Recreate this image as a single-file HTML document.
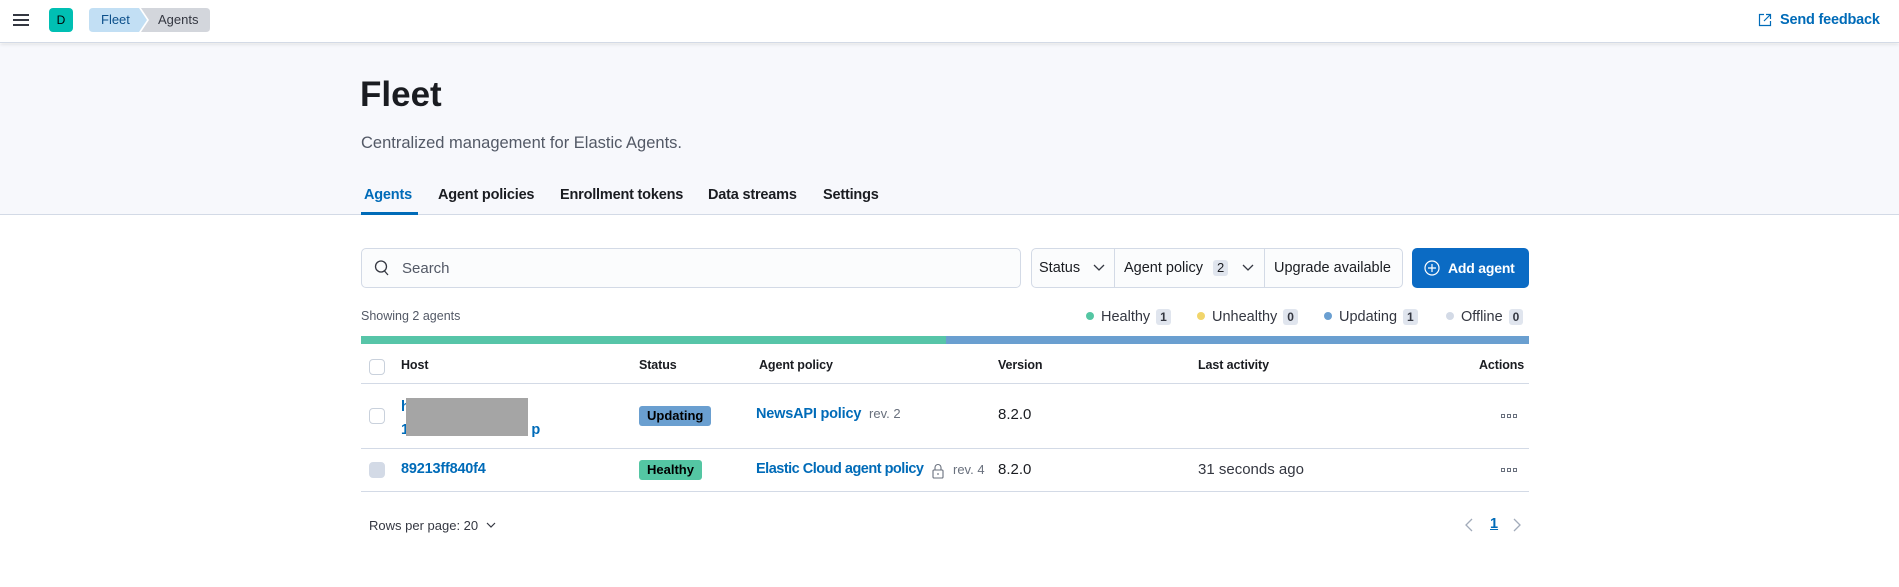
<!DOCTYPE html>
<html><head><meta charset="utf-8"><style>
*{box-sizing:border-box;margin:0;padding:0}
body{width:1899px;height:587px;overflow:hidden;background:#fff;font-family:"Liberation Sans",sans-serif;color:#1a1c21;position:relative}
.a{position:absolute;white-space:nowrap}
.hdr{position:absolute;left:0;top:0;width:1899px;height:43px;background:#fff;border-bottom:1px solid #d3dae6;box-shadow:0 1px 4px rgba(0,0,0,.12);z-index:2}
.pg{position:absolute;left:0;top:44px;width:1899px;height:171px;background:#f7f8fc;border-bottom:1px solid #d3dae6}
.tab{position:absolute;top:187px;font-size:14.5px;font-weight:bold;color:#1a1c21;letter-spacing:-0.2px}
.th{position:absolute;top:358px;font-size:12.5px;font-weight:bold;letter-spacing:-0.1px}
.cb{position:absolute;width:16px;height:16px;border:1px solid #c9d1dc;border-radius:4px;background:#fff}
.badge{position:absolute;font-size:13px;padding:0 8px;border-radius:3px;line-height:20px}
.num{display:inline-block;background:#e0e5ee;border-radius:3px;padding:0 4px;font-size:12px;font-weight:bold;line-height:16px;margin-left:6px}
.dot{display:inline-block;width:8px;height:8px;border-radius:50%;margin-right:7px;vertical-align:1px}
.link{color:#006bb8;font-weight:bold;letter-spacing:-0.2px}
.dots{position:absolute;font-size:0}
.dots i{display:inline-block;width:4px;height:4px;border:1px solid #69707d;margin-right:2px}
</style></head><body>
<div class="hdr">
  <div class="a" style="left:13px;top:14px;width:16px;height:2px;background:#343741"></div>
  <div class="a" style="left:13px;top:19px;width:16px;height:2px;background:#343741"></div>
  <div class="a" style="left:13px;top:24px;width:16px;height:2px;background:#343741"></div>
  <div class="a" style="left:49px;top:8px;width:24px;height:24px;background:#00bfb3;border-radius:4px;font-size:12px;line-height:24px;text-align:center;color:#000">D</div>
  <svg class="a" style="left:89px;top:8px" width="122" height="24"><path d="M4 0H50L58 12 50 24H4Q0 24 0 20V4Q0 0 4 0Z" fill="#c2dff4"/><path d="M52 0H117Q121 0 121 4V20Q121 24 117 24H52L60 12Z" fill="#d3d6dc"/></svg>
  <div class="a" style="left:101px;top:12px;font-size:13px;color:#0b4f8a">Fleet</div>
  <div class="a" style="left:158px;top:12px;font-size:13px;color:#343741">Agents</div>
  <svg class="a" style="left:1757px;top:12px" width="16" height="16" viewBox="0 0 16 16" fill="none" stroke="#006bb8" stroke-width="1.2"><path d="M7 2.5H2.5V13.5H13.5V9M9 2.5H13.5V7M13.5 2.5L7 9"/></svg>
  <div class="a" style="left:1780px;top:12px;font-size:14.5px;font-weight:bold;color:#006bb8;letter-spacing:-0.2px">Send feedback</div>
</div>
<div class="pg"></div>
<div class="a" style="left:360px;top:75px;font-size:35px;font-weight:bold;color:#1a1c21">Fleet</div>
<div class="a" style="left:361px;top:134px;font-size:16.5px;color:#535966">Centralized management for Elastic Agents.</div>
<div class="tab" style="left:364px;color:#006bb8">Agents</div>
<div class="tab" style="left:438px">Agent policies</div>
<div class="tab" style="left:560px">Enrollment tokens</div>
<div class="tab" style="left:708px">Data streams</div>
<div class="tab" style="left:823px">Settings</div>
<div class="a" style="left:361px;top:212px;width:57px;height:3px;background:#006bb8"></div>

<div class="a" style="left:361px;top:248px;width:660px;height:40px;background:#fbfcfd;border:1px solid #d3dae6;border-radius:5px"></div>
<svg class="a" style="left:373px;top:259px" width="18" height="18" viewBox="0 0 18 18" fill="none" stroke="#343741" stroke-width="1.3"><circle cx="8" cy="7.5" r="5.5"/><path d="M11.5 12L15 16"/></svg>
<div class="a" style="left:402px;top:260px;font-size:15px;color:#535966">Search</div>
<div class="a" style="left:1031px;top:248px;width:372px;height:40px;background:#fbfcfd;border:1px solid #d3dae6;border-radius:5px"></div>
<div class="a" style="left:1114px;top:249px;width:1px;height:38px;background:#d3dae6"></div>
<div class="a" style="left:1264px;top:249px;width:1px;height:38px;background:#d3dae6"></div>
<div class="a" style="left:1039px;top:260px;font-size:14.5px;color:#1a1c21">Status</div>
<svg class="a" style="left:1093px;top:263px" width="12" height="10"><path d="M1 2L6 7 11 2" fill="none" stroke="#343741" stroke-width="1.3"/></svg>
<div class="a" style="left:1124px;top:260px;font-size:14.5px">Agent policy <span class="num" style="font-size:13px;font-weight:normal">2</span></div>
<svg class="a" style="left:1242px;top:263px" width="12" height="10"><path d="M1 2L6 7 11 2" fill="none" stroke="#343741" stroke-width="1.3"/></svg>
<div class="a" style="left:1274px;top:260px;font-size:14.5px">Upgrade available</div>
<div class="a" style="left:1412px;top:248px;width:117px;height:40px;background:#0b6bc4;border-radius:5px"></div>
<svg class="a" style="left:1423px;top:259px" width="18" height="18" viewBox="0 0 18 18" fill="none" stroke="#fff" stroke-width="1.2"><circle cx="9" cy="9" r="7"/><path d="M9 5V13M5 9H13"/></svg>
<div class="a" style="left:1448px;top:260px;font-size:14px;font-weight:bold;color:#fff;letter-spacing:-0.2px">Add agent</div>

<div class="a" style="left:361px;top:309px;font-size:12.5px;color:#535966">Showing 2 agents</div>
<div class="a" style="left:1086px;top:309px;font-size:14.5px;color:#343741"><span class="dot" style="background:#54c6a3"></span>Healthy<span class="num">1</span></div>
<div class="a" style="left:1197px;top:309px;font-size:14.5px;color:#343741"><span class="dot" style="background:#f1d56b"></span>Unhealthy<span class="num">0</span></div>
<div class="a" style="left:1324px;top:309px;font-size:14.5px;color:#343741"><span class="dot" style="background:#6a9fd1"></span>Updating<span class="num">1</span></div>
<div class="a" style="left:1446px;top:309px;font-size:14.5px;color:#343741"><span class="dot" style="background:#d3dae6"></span>Offline<span class="num">0</span></div>
<div class="a" style="left:361px;top:336px;width:585px;height:8px;background:#57c5a8"></div>
<div class="a" style="left:946px;top:336px;width:583px;height:8px;background:#6a9fd0"></div>

<div class="cb" style="left:369px;top:359px"></div>
<div class="th" style="left:401px">Host</div>
<div class="th" style="left:639px">Status</div>
<div class="th" style="left:759px">Agent policy</div>
<div class="th" style="left:998px">Version</div>
<div class="th" style="left:1198px">Last activity</div>
<div class="th" style="left:1479px">Actions</div>
<div class="a" style="left:361px;top:383px;width:1168px;height:1px;background:#d3dae6"></div>

<div class="cb" style="left:369px;top:408px"></div>
<div class="a link" style="left:401px;top:396px;font-size:14.5px;line-height:23px">h<br>1&nbsp;&nbsp;&nbsp;&nbsp;&nbsp;&nbsp;&nbsp;&nbsp;&nbsp;&nbsp;&nbsp;&nbsp;&nbsp;&nbsp;&nbsp;&nbsp;&nbsp;&nbsp;&nbsp;&nbsp;&nbsp;&nbsp;&nbsp;&nbsp;&nbsp;&nbsp;&nbsp;&nbsp;&nbsp;&nbsp;&nbsp;&nbsp;p</div>
<div class="a" style="left:406px;top:398px;width:122px;height:38px;background:#a5a5a5"></div>
<div class="badge" style="left:639px;top:406px;background:#6a9fd0;color:#000;font-weight:bold;font-size:13px">Updating</div>
<div class="a link" style="left:756px;top:406px;font-size:14.5px">NewsAPI policy <span style="font-weight:normal;color:#69707d;font-size:13px;margin-left:4px;letter-spacing:0">rev. 2</span></div>
<div class="a" style="left:998px;top:406px;font-size:15px">8.2.0</div>
<div class="dots" style="left:1501px;top:414px"><i></i><i></i><i></i></div>
<div class="a" style="left:361px;top:448px;width:1168px;height:1px;background:#d3dae6"></div>

<div class="cb" style="left:369px;top:462px;background:#d3dae6;border-color:#d3dae6"></div>
<div class="a link" style="left:401px;top:461px;font-size:14.5px">89213ff840f4</div>
<div class="badge" style="left:639px;top:460px;background:#54c6a3;color:#000;font-weight:bold;font-size:13px">Healthy</div>
<div class="a link" style="left:756px;top:461px;font-size:14.5px;letter-spacing:-0.5px">Elastic Cloud agent policy</div>
<svg class="a" style="left:932px;top:463px" width="12" height="16" viewBox="0 0 12 16" fill="none" stroke="#69707d" stroke-width="1.1"><path d="M3 7V4.5A3 3 0 0 1 9 4.5V7"/><rect x="1" y="7" width="10" height="8" rx="1"/><path d="M6 10V12"/></svg>
<div class="a" style="left:953px;top:462px;font-size:13px;color:#69707d">rev. 4</div>
<div class="a" style="left:998px;top:461px;font-size:15px">8.2.0</div>
<div class="a" style="left:1198px;top:461px;font-size:15px;color:#343741">31 seconds ago</div>
<div class="dots" style="left:1501px;top:468px"><i></i><i></i><i></i></div>
<div class="a" style="left:361px;top:491px;width:1168px;height:1px;background:#d3dae6"></div>

<div class="a" style="left:369px;top:518px;font-size:13px;color:#343741">Rows per page: 20</div>
<svg class="a" style="left:486px;top:521px" width="10" height="8"><path d="M1 2L5 6 9 2" fill="none" stroke="#343741" stroke-width="1.2"/></svg>
<svg class="a" style="left:1464px;top:517px" width="10" height="16"><path d="M8 2L2 8 8 14" fill="none" stroke="#a2abba" stroke-width="1.3"/></svg>
<div class="a" style="left:1490px;top:516px;font-size:14.5px;font-weight:bold;color:#006bb8;text-decoration:underline">1</div>
<svg class="a" style="left:1512px;top:517px" width="10" height="16"><path d="M2 2L8 8 2 14" fill="none" stroke="#a2abba" stroke-width="1.3"/></svg>
</body></html>
